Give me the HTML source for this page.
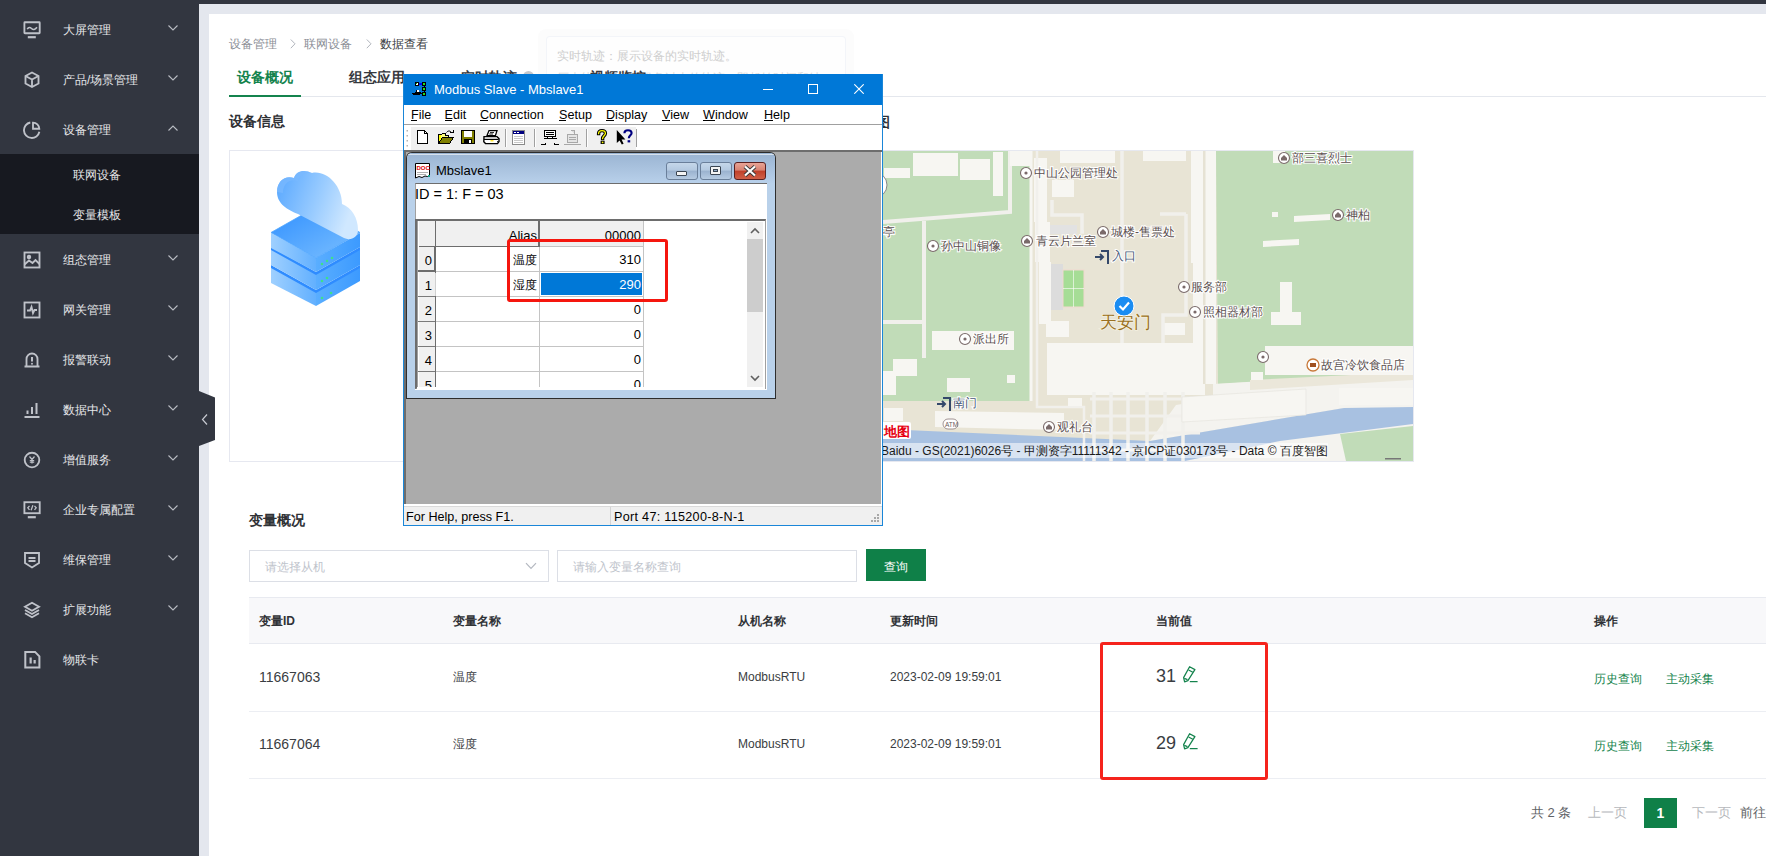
<!DOCTYPE html>
<html><head><meta charset="utf-8">
<style>
*{margin:0;padding:0;box-sizing:border-box}
html,body{width:1766px;height:856px;overflow:hidden;background:#e4e7ee;font-family:"Liberation Sans",sans-serif;position:relative}
.abs{position:absolute}
#side{position:absolute;left:0;top:0;width:199px;height:856px;background:#323640}
#topbar{position:absolute;left:0;top:0;width:1766px;height:4px;background:#323640}
.mi{position:absolute;left:0;width:199px;height:50px;color:#e6e7ea;font-size:12px;line-height:50px}
.mi .t{position:absolute;left:63px;top:1px}
.mi svg.ic{position:absolute;left:23px;top:17px;width:18px;height:18px}
.mi .chev{position:absolute;left:168px;top:21px;width:10px;height:6px}
#sub{position:absolute;left:0;top:154px;width:199px;height:80px;background:#171920}
.si{position:absolute;left:73px;margin-top:1px;color:#e6e6e8;font-size:12px;line-height:40px;height:40px}
#card{position:absolute;left:209px;top:14px;width:1557px;height:842px;background:#fff}
.tab{font-size:14px;line-height:18px;font-weight:bold;color:#36393e;white-space:nowrap}
.h2{font-size:14px;line-height:18px;font-weight:bold;color:#303236;white-space:nowrap}
.ph{font-size:12px;line-height:16px;color:#c0c4cc;white-space:nowrap}
.th{top:613px;font-size:12px;line-height:16px;font-weight:bold;color:#303236;white-space:nowrap}
.td14{font-size:14px;line-height:18px;color:#3a3d42;white-space:nowrap}
.td12{font-size:12px;line-height:18px;color:#3a3d42;white-space:nowrap}
.val{font-size:18px;line-height:24px;color:#3a3d42}
.lk{font-size:12px;line-height:18px;color:#14834d;white-space:nowrap;margin-top:2px}
.pg{font-size:13px;line-height:18px;white-space:nowrap;margin-top:1px}
.menu{top:107px;font-size:12.6px;line-height:16px;color:#000;white-space:nowrap}
.ul{top:120px;height:1px;background:#000}
.stat{top:509px;font-size:12.6px;line-height:16px;color:#000;white-space:nowrap}
.gt{font-size:13px;line-height:14px;color:#000;white-space:nowrap}
</style></head><body>
<div id="side">
<div class="mi" style="top:4px"><svg class="ic" viewBox="0 0 18 18" fill="none" stroke="#bfc2c9" stroke-width="1.85"><rect x="1.4" y="1.2" width="15.3" height="11" rx="0.5"/><path d="M4.2 8.2 C5.5 6,7 6,8.5 7.5 S12 9,14 6.2" stroke-width="1.5"/><path d="M4.8 16.2h8" stroke-width="2.2"/></svg><span class="t">大屏管理</span>
<svg class="chev" viewBox="0 0 10 6" fill="none" stroke="#b9bcc3" stroke-width="1.1"><path d="M0.5 0.5 L5 5 L9.5 0.5"/></svg>
</div>
<div class="mi" style="top:54px"><svg class="ic" viewBox="0 0 18 18" fill="none" stroke="#bfc2c9" stroke-width="1.85"><path d="M9 1.5 L15.5 5 V12.5 L9 16 L2.5 12.5 V5 Z"/><path d="M2.5 5 L9 8.5 L15.5 5 M9 8.5 V16"/></svg><span class="t">产品/场景管理</span>
<svg class="chev" viewBox="0 0 10 6" fill="none" stroke="#b9bcc3" stroke-width="1.1"><path d="M0.5 0.5 L5 5 L9.5 0.5"/></svg>
</div>
<div class="mi" style="top:104px"><svg class="ic" viewBox="0 0 18 18" fill="none" stroke="#bfc2c9" stroke-width="1.85"><path d="M7.3 1.5 A7.8 7.8 0 1 0 16.4 10.8"/><path d="M10 1.6 V7.7 H16.3 A6.3 6.3 0 0 0 10 1.6 Z"/></svg><span class="t">设备管理</span>
<svg class="chev" viewBox="0 0 10 6" fill="none" stroke="#b9bcc3" stroke-width="1.1"><path d="M0.5 5.5 L5 1 L9.5 5.5"/></svg>
</div>
<div id="sub"><div class="si" style="top:0">联网设备</div><div class="si" style="top:40px">变量模板</div></div>
<div class="mi" style="top:234px"><svg class="ic" viewBox="0 0 18 18" fill="none" stroke="#bfc2c9" stroke-width="1.85"><rect x="1.5" y="1.5" width="15" height="15"/><circle cx="6" cy="6" r="1.3" fill="#b9bcc3"/><path d="M1.5 13.5 L6 9.5 L9.5 12 L12.5 9 L16.5 13"/></svg><span class="t">组态管理</span>
<svg class="chev" viewBox="0 0 10 6" fill="none" stroke="#b9bcc3" stroke-width="1.1"><path d="M0.5 0.5 L5 5 L9.5 0.5"/></svg>
</div>
<div class="mi" style="top:284px"><svg class="ic" viewBox="0 0 18 18" fill="none" stroke="#bfc2c9" stroke-width="1.85"><rect x="1.5" y="1.5" width="15" height="15"/><path d="M4 9.5 H7 L8.5 6 L10 12 L11.5 9 H14"/></svg><span class="t">网关管理</span>
<svg class="chev" viewBox="0 0 10 6" fill="none" stroke="#b9bcc3" stroke-width="1.1"><path d="M0.5 0.5 L5 5 L9.5 0.5"/></svg>
</div>
<div class="mi" style="top:334px"><svg class="ic" viewBox="0 0 18 18" fill="none" stroke="#bfc2c9" stroke-width="1.85"><path d="M3.5 15 V8 A5.5 5.5 0 0 1 14.5 8 V15"/><path d="M1.5 15.5 H16.5" stroke-width="2"/><path d="M9 6 V10.5" stroke-width="2"/><circle cx="9" cy="12.8" r="1" fill="#b9bcc3" stroke="none"/></svg><span class="t">报警联动</span>
<svg class="chev" viewBox="0 0 10 6" fill="none" stroke="#b9bcc3" stroke-width="1.1"><path d="M0.5 0.5 L5 5 L9.5 0.5"/></svg>
</div>
<div class="mi" style="top:384px"><svg class="ic" viewBox="0 0 18 18" fill="none" stroke="#bfc2c9" stroke-width="1.85"><path d="M1.5 16 H16.5" stroke-width="2"/><path d="M4.5 13 V9.5 M9 13 V6 M13.5 13 V2" stroke-width="2"/></svg><span class="t">数据中心</span>
<svg class="chev" viewBox="0 0 10 6" fill="none" stroke="#b9bcc3" stroke-width="1.1"><path d="M0.5 0.5 L5 5 L9.5 0.5"/></svg>
</div>
<div class="mi" style="top:434px"><svg class="ic" viewBox="0 0 18 18" fill="none" stroke="#bfc2c9" stroke-width="1.85"><circle cx="9" cy="9" r="7.3"/><path d="M6.5 5.5 L9 8.5 L11.5 5.5 M9 8.5 V12.5 M6.8 9.5 H11.2 M6.8 11.2 H11.2" stroke-width="1.2"/></svg><span class="t">增值服务</span>
<svg class="chev" viewBox="0 0 10 6" fill="none" stroke="#b9bcc3" stroke-width="1.1"><path d="M0.5 0.5 L5 5 L9.5 0.5"/></svg>
</div>
<div class="mi" style="top:484px"><svg class="ic" viewBox="0 0 18 18" fill="none" stroke="#bfc2c9" stroke-width="1.85"><rect x="1.4" y="1.2" width="15.3" height="11"/><path d="M6.5 4.8 L4.8 6.8 L6.5 8.8 M11.5 4.8 L13.2 6.8 L11.5 8.8 M9.9 4.3 L8.1 9.3" stroke-width="1.3"/><path d="M4.8 16.2h8" stroke-width="2.2"/></svg><span class="t">企业专属配置</span>
<svg class="chev" viewBox="0 0 10 6" fill="none" stroke="#b9bcc3" stroke-width="1.1"><path d="M0.5 0.5 L5 5 L9.5 0.5"/></svg>
</div>
<div class="mi" style="top:534px"><svg class="ic" viewBox="0 0 18 18" fill="none" stroke="#bfc2c9" stroke-width="1.85"><path d="M2 2 H16 V12 L9 16.5 L2 12 Z"/><path d="M5.5 7 H12.5 M5.5 10 H12.5"/></svg><span class="t">维保管理</span>
<svg class="chev" viewBox="0 0 10 6" fill="none" stroke="#b9bcc3" stroke-width="1.1"><path d="M0.5 0.5 L5 5 L9.5 0.5"/></svg>
</div>
<div class="mi" style="top:584px"><svg class="ic" viewBox="0 0 18 18" fill="none" stroke="#bfc2c9" stroke-width="1.85"><path d="M9 1.8 L16 5.8 L9 9.8 L2 5.8 Z"/><path d="M2 9 L9 13 L16 9"/><path d="M2 12.2 L9 16.2 L16 12.2"/></svg><span class="t">扩展功能</span>
<svg class="chev" viewBox="0 0 10 6" fill="none" stroke="#b9bcc3" stroke-width="1.1"><path d="M0.5 0.5 L5 5 L9.5 0.5"/></svg>
</div>
<div class="mi" style="top:634px"><svg class="ic" viewBox="0 0 18 18" fill="none" stroke="#bfc2c9" stroke-width="1.85"><path d="M2.3 0.9 H12 L16.4 5.3 V16.4 H2.3 Z" stroke-width="2"/><path d="M7.65 12.6 V6.5 M11.65 12.6 V8.9" stroke-width="2.2"/></svg><span class="t">物联卡</span>
</div>

</div>
<div id="topbar"></div>
<div id="card"></div>
<!-- breadcrumb -->
<div class="abs" style="left:229px;top:36px;font-size:12px;line-height:16px;color:#8a8e96;white-space:nowrap">
<span class="abs" style="left:0">设备管理</span>
<svg class="abs" style="left:61px;top:3px" width="6" height="10" viewBox="0 0 6 10" fill="none" stroke="#b0b4bc" stroke-width="1"><path d="M0.8 0.5 L5 4.8 L0.8 9.2"/></svg>
<span class="abs" style="left:75px">联网设备</span>
<svg class="abs" style="left:137px;top:3px" width="6" height="10" viewBox="0 0 6 10" fill="none" stroke="#b0b4bc" stroke-width="1"><path d="M0.8 0.5 L5 4.8 L0.8 9.2"/></svg>
<span class="abs" style="left:151px;color:#3a3d42">数据查看</span>
</div>
<!-- tabs -->
<div class="abs" style="left:229px;top:96px;width:1537px;height:1px;background:#e4e7ed"></div>
<div class="abs" style="left:229px;top:95px;width:72px;height:2px;background:#14834d"></div>
<div class="abs tab" style="left:237px;top:68px;color:#14834d">设备概况</div>
<div class="abs tab" style="left:349px;top:68px">组态应用</div>
<div class="abs tab" style="left:461px;top:68px">实时轨迹</div>

<!-- section titles -->
<div class="abs h2" style="left:229px;top:112px">设备信息</div>
<div class="abs h2" style="left:834px;top:113px">位置地图</div>
<div class="abs" id="devbox" style="left:229px;top:150px;width:600px;height:312px;border:1px solid #e6e8f0"></div>
<!--CLOUD-->
<svg class="abs" style="left:260px;top:160px" width="110" height="155" viewBox="260 160 110 155">
<defs>
<linearGradient id="gl" x1="0" y1="0" x2="1" y2="0"><stop offset="0" stop-color="#9fd0ff"/><stop offset="1" stop-color="#62b0ff"/></linearGradient>
<linearGradient id="gr" x1="0" y1="0" x2="1" y2="0"><stop offset="0" stop-color="#5aaeff"/><stop offset="1" stop-color="#3c9aff"/></linearGradient>
<linearGradient id="gt" x1="0" y1="0" x2="1" y2="1"><stop offset="0" stop-color="#2f8fff"/><stop offset="1" stop-color="#7cc0ff"/></linearGradient>
<linearGradient id="gc" x1="0" y1="0" x2="1" y2="0.3"><stop offset="0" stop-color="#55a6ff"/><stop offset="0.6" stop-color="#9ccdff"/><stop offset="1" stop-color="#d0e8ff"/></linearGradient>
</defs>
<g>
<path d="M271 267 L316 292 L316 306 L271 283 Z" fill="url(#gl)"/>
<path d="M316 292 L360 267 L360 281 L316 306 Z" fill="url(#gr)"/>
<path d="M271 265 L316 290 L360 265 L360 268 L316 293 L271 268 Z" fill="#2f8cff"/>
<path d="M271 249 L316 274 L316 290 L271 265 Z" fill="url(#gl)"/>
<path d="M316 274 L360 249 L360 265 L316 290 Z" fill="url(#gr)"/>
<path d="M271 247 L316 272 L360 247 L360 250 L316 275 L271 250 Z" fill="#2f8cff"/>
<path d="M271 233 L316 258 L316 272 L271 248 Z" fill="url(#gl)"/>
<path d="M316 258 L360 233 L360 247 L316 272 Z" fill="url(#gr)"/>
<path d="M271 232.5 L316 207 L360 232.5 L316 258 Z" fill="url(#gt)" stroke="#4ea6ff" stroke-width="0.8"/>
<path d="M298 214 C288 210,277 204,277 192 C277 180,286 175,294 178 C296 171,304 169,312 173 C326 170,342 185,342 204 C352 208,358 218,358 230 C358 238,350 241,344 238 Z" fill="url(#gc)"/>
<path d="M277 192 C277 180,286 175,294 178 C296 171,304 169,312 173 C305 172,300 175,298 181 C290 178,283 183,283 193 Z" fill="#7ab9ff" opacity="0.7"/>
</g>
<g fill="#3ee08a">
<circle cx="322" cy="264" r="1.3"/><circle cx="327" cy="261" r="1.3"/><circle cx="332" cy="258" r="1.3"/>
<circle cx="322" cy="281" r="1.3"/><circle cx="327" cy="278" r="1.3"/>
<circle cx="322" cy="298" r="1.3"/><circle cx="331" cy="293" r="1.3"/>
</g>
</svg>

<!--/CLOUD-->
<!--MAP-->
<svg class="abs" style="left:883px;top:151px" width="530" height="310" viewBox="883 151 530 310" font-family="Liberation Sans, sans-serif">
<rect x="883" y="151" width="530" height="310" fill="#e8e4d5"/>
<rect x="883" y="151" width="148" height="250" fill="#c1dcb8"/>
<path d="M1216 151 H1413 V372 L1218 384 Z" fill="#c1dcb8"/>
<path d="M1213 384 L1413 372 V408 L1344 408 L1150 441 L1176 405 L1213 399 Z" fill="#f4f3ef"/>
<path d="M1150 441 L1344 408 L1413 408 V461 H1140 Z" fill="#f4f3ef"/>
<path d="M1340 434 L1413 426 V461 H1346 Z" fill="#c1dcb8"/>
<path d="M883 429 L1150 441 L1344 408 L1413 407 V424 L1280 441 L1185 461 H883 Z" fill="#a8c1e1"/>
<path d="M883 222 L1010 212 V151" fill="none" stroke="#f1f0ec" stroke-width="4"/>
<path d="M924 221 V358 M883 322 H924" fill="none" stroke="#f1f0ec" stroke-width="4"/>
<rect x="884" y="168" width="26" height="10" fill="#f7f6f2"/>
<rect x="913" y="153" width="45" height="23" fill="#f7f6f2"/>
<rect x="960" y="159" width="30" height="21" fill="#f7f6f2"/>
<rect x="993" y="152" width="10" height="44" fill="#f7f6f2"/>
<rect x="1010" y="151" width="21" height="15" fill="#f7f6f2"/>
<rect x="932" y="331" width="82" height="19" fill="#f7f6f2"/>
<rect x="893" y="359" width="24" height="17" fill="#f7f6f2"/>
<rect x="883" y="371" width="13" height="24" fill="#f7f6f2"/>
<rect x="947" y="378" width="23" height="14" fill="#f7f6f2"/>
<rect x="1007" y="375" width="8" height="8" fill="#f7f6f2"/>
<path d="M1250 380 L1413 372 V380 L1250 390 Z" fill="#ebe7da"/>
<path d="M1031 151 V401" stroke="#f7f6f2" stroke-width="3"/>
<rect x="1034" y="158" width="13" height="64" fill="#f7f6f2"/>
<rect x="1035" y="222" width="15" height="40" fill="#f7f6f2"/>
<rect x="1039" y="262" width="12" height="62" fill="#f7f6f2"/>
<rect x="1046" y="321" width="23" height="16" fill="#f7f6f2"/>
<rect x="1052" y="180" width="22" height="17" fill="#f7f6f2"/>
<rect x="1191" y="151" width="12" height="62" fill="#f7f6f2"/>
<rect x="1191" y="213" width="14" height="50" fill="#f7f6f2"/>
<rect x="1193" y="263" width="12" height="80" fill="#f7f6f2"/>
<rect x="1204" y="151" width="12" height="233" fill="#f7f6f2"/>
<rect x="1047" y="343" width="158" height="52" fill="#f7f6f2"/>
<rect x="1143" y="151" width="43" height="10" fill="#f7f6f2"/>
<rect x="1163" y="323" width="22" height="12" fill="#f7f6f2"/>
<rect x="1060" y="151" width="55" height="12" fill="#f7f6f2"/>
<rect x="1203" y="151" width="2.5" height="233" fill="#e6e2d4"/>
<rect x="1273" y="151" width="12" height="12" fill="#f7f6f2"/>
<path d="M1122 151 V343 M1186 214 V315 H1163 V343 M1052 200 V215 H1082 V232 L1084 232 M1186 214 H1160" fill="none" stroke="#f1f0ec" stroke-width="3.5"/>
<path d="M1037 151 V407 H1084 V461" fill="none" stroke="#f1f0ec" stroke-width="2.5"/>
<rect x="1050" y="225" width="27" height="9" fill="#e2e2e2"/>
<rect x="1051" y="264" width="12" height="46" fill="#dcdcdc"/>
<rect x="1063" y="270" width="21" height="37" fill="#a6dd96" stroke="#f0d8d0" stroke-width="1"/>
<path d="M1063 288.5 H1084 M1073.5 270 V307" stroke="#fff" stroke-width="0.6"/>
<path d="M1094 392 V461" stroke="#f1f0ec" stroke-width="3.5"/>
<path d="M1111 392 V461" stroke="#f1f0ec" stroke-width="3.5"/>
<path d="M1128 392 V461" stroke="#f1f0ec" stroke-width="3.5"/>
<path d="M1147 392 V461" stroke="#f1f0ec" stroke-width="3.5"/>
<path d="M1165 392 V461" stroke="#f1f0ec" stroke-width="3.5"/>
<path d="M1183 392 V461" stroke="#f1f0ec" stroke-width="3.5"/>
<path d="M1090 399 H1200" stroke="#f1f0ec" stroke-width="3"/>
<path d="M1090 416 H1200" stroke="#f1f0ec" stroke-width="3"/>
<path d="M1090 433 H1200" stroke="#f1f0ec" stroke-width="3"/>
<path d="M1090 450 H1200" stroke="#f1f0ec" stroke-width="3"/>
<rect x="1272" y="212" width="6" height="5" fill="#f7f6f2"/>
<rect x="1280" y="282" width="12" height="35" fill="#f7f6f2"/>
<rect x="1271" y="312" width="30" height="13" fill="#f7f6f2"/>
<rect x="1265" y="346" width="148" height="29" fill="#f7f6f2"/>
<rect x="1251" y="372" width="12" height="8" fill="#f7f6f2"/>
<rect x="1339" y="388" width="74" height="17" fill="#f7f6f2"/>
<path d="M1294 216 L1330 214 V220 L1294 222 Z M1263 241 L1299 239 V245 L1263 247 Z" fill="#f7f6f2"/>
<path d="M1182 397 L1306 389 V415 L1182 422 Z" fill="#f7f6f2" stroke="#e4e2dc" stroke-width="0.6"/>
<path d="M935 411 L1064 413 V430 L935 427 Z" fill="#f7f6f2"/>
<rect x="884" y="408" width="19" height="13" fill="#f7f6f2"/>
<rect x="1068" y="398" width="14" height="8" fill="#f7f6f2"/>
<circle cx="1026" cy="173" r="5.5" fill="#fff" stroke="#7a6a6a" stroke-width="1.1"/><circle cx="1026" cy="173" r="1.6" fill="#7a6a6a"/>
<text x="1034" y="177.3" font-size="12" fill="#5b5050" stroke="#fff" stroke-width="2" paint-order="stroke">中山公园管理处</text>
<circle cx="933" cy="246" r="5.5" fill="#fff" stroke="#7a6a6a" stroke-width="1.1"/><circle cx="933" cy="246" r="1.6" fill="#7a6a6a"/>
<text x="941" y="250.3" font-size="12" fill="#5b5050" stroke="#fff" stroke-width="2" paint-order="stroke">孙中山铜像</text>
<circle cx="1027" cy="241" r="5.5" fill="#fff" stroke="#7a6a6a" stroke-width="1.1"/><path d="M1024 243.5 H1030 V241 L1027 238 L1024 241 Z" fill="#7a6a6a"/>
<text x="1036" y="245.3" font-size="12" fill="#5b5050" stroke="#fff" stroke-width="2" paint-order="stroke">青云片兰室</text>
<circle cx="1103" cy="232" r="5.5" fill="#fff" stroke="#7a6a6a" stroke-width="1.1"/><path d="M1100 234.5 H1106 V232 L1103 229 L1100 232 Z" fill="#7a6a6a"/>
<text x="1111" y="236.3" font-size="12" fill="#5b5050" stroke="#fff" stroke-width="2" paint-order="stroke">城楼-售票处</text>
<circle cx="1184" cy="287" r="5.5" fill="#fff" stroke="#7a6a6a" stroke-width="1.1"/><circle cx="1184" cy="287" r="1.6" fill="#7a6a6a"/>
<text x="1191" y="291.3" font-size="12" fill="#5b5050" stroke="#fff" stroke-width="2" paint-order="stroke">服务部</text>
<circle cx="1195" cy="312" r="5.5" fill="#fff" stroke="#7a6a6a" stroke-width="1.1"/><circle cx="1195" cy="312" r="1.6" fill="#7a6a6a"/>
<text x="1203" y="316.3" font-size="12" fill="#5b5050" stroke="#fff" stroke-width="2" paint-order="stroke">照相器材部</text>
<circle cx="1284" cy="158" r="5.5" fill="#fff" stroke="#7a6a6a" stroke-width="1.1"/><path d="M1281 160.5 H1287 V158 L1284 155 L1281 158 Z" fill="#7a6a6a"/>
<text x="1292" y="162.3" font-size="12" fill="#5b5050" stroke="#fff" stroke-width="2" paint-order="stroke">部三喜烈士</text>
<circle cx="1338" cy="215" r="5.5" fill="#fff" stroke="#7a6a6a" stroke-width="1.1"/><path d="M1335 217.5 H1341 V215 L1338 212 L1335 215 Z" fill="#7a6a6a"/>
<text x="1346" y="219.3" font-size="12" fill="#5b5050" stroke="#fff" stroke-width="2" paint-order="stroke">神柏</text>
<circle cx="965" cy="339" r="5.5" fill="#fff" stroke="#7a6a6a" stroke-width="1.1"/><circle cx="965" cy="339" r="1.6" fill="#7a6a6a"/>
<text x="973" y="343.3" font-size="12" fill="#5b5050" stroke="#fff" stroke-width="2" paint-order="stroke">派出所</text>
<circle cx="1049" cy="427" r="5.5" fill="#fff" stroke="#7a6a6a" stroke-width="1.1"/><path d="M1046 429.5 H1052 V427 L1049 424 L1046 427 Z" fill="#7a6a6a"/>
<text x="1057" y="431.3" font-size="12" fill="#5b5050" stroke="#fff" stroke-width="2" paint-order="stroke">观礼台</text>
<circle cx="1263" cy="357" r="5.5" fill="#fff" stroke="#7a6a6a" stroke-width="1.1"/><circle cx="1263" cy="357" r="1.6" fill="#7a6a6a"/>
<circle cx="1313" cy="365" r="6" fill="#fff" stroke="#c87838" stroke-width="1.3"/><rect x="1310" y="363" width="6" height="4" fill="#a05020"/>
<text x="1321" y="369.3" font-size="12" fill="#5b5050" stroke="#fff" stroke-width="2" paint-order="stroke">故宫冷饮食品店</text>
<text x="883" y="236.3" font-size="12" fill="#5b5050" stroke="#fff" stroke-width="2" paint-order="stroke">亭</text>
<path d="M1101 251 H1108 V264" fill="none" stroke="#34486a" stroke-width="2"/><path d="M1095 257 H1103 M1100 254 L1103 257 L1100 260" fill="none" stroke="#34486a" stroke-width="2"/>
<path d="M943 398 H950 V411" fill="none" stroke="#34486a" stroke-width="2"/><path d="M937 404 H945 M942 401 L945 404 L942 407" fill="none" stroke="#34486a" stroke-width="2"/>
<text x="1112" y="260.3" font-size="12" fill="#4a5a78" stroke="#fff" stroke-width="2" paint-order="stroke">入口</text>
<text x="953" y="407.3" font-size="12" fill="#4a5a78" stroke="#fff" stroke-width="2" paint-order="stroke">南门</text>
<rect x="943" y="419" width="15" height="10" rx="5" fill="#fff" stroke="#8a7a7a" stroke-width="0.8"/><text x="945" y="427" font-size="6.5" fill="#6a5a5a">ATM</text>
<text x="1100" y="328" font-size="16.5" fill="#9a7022" stroke="#f4f0e0" stroke-width="1.5" paint-order="stroke">天安门</text>
<circle cx="1124" cy="306" r="10" fill="#1a8cf2" stroke="#fff" stroke-width="1"/><path d="M1119.5 306 L1123 309.5 L1129 302.5" fill="none" stroke="#fff" stroke-width="2.2"/>
<rect x="880" y="422" width="31" height="17" rx="2" fill="#fff"/><text x="884" y="436" font-size="13" font-weight="bold" fill="#e60012">地图</text>
<rect x="883" y="443" width="445" height="15" fill="rgba(255,255,255,0.55)"/>
<text x="881" y="455" font-size="12" fill="#1a1a1a">Baidu - GS(2021)6026号 - 甲测资字11111342 - 京ICP证030173号 - Data © 百度智图</text>
<rect x="1385" y="458" width="16" height="1.5" fill="#777"/>
</svg>
<div class="abs" style="left:883px;top:150px;width:531px;height:1px;background:#e6e8f0"></div>
<div class="abs" style="left:883px;top:461px;width:531px;height:1px;background:#e6e8f0"></div>
<div class="abs" style="left:1413px;top:150px;width:1px;height:312px;background:#e6e8f0"></div>
<svg class="abs" style="left:860px;top:170px" width="30" height="30"><circle cx="14" cy="15" r="13" fill="#fff" stroke="#888" stroke-width="1"/></svg>
<!--/MAP-->
<div class="abs h2" style="left:249px;top:511px">变量概况</div>
<!-- filters -->
<div class="abs" style="left:249px;top:550px;width:300px;height:32px;border:1px solid #dcdfe6"></div>
<div class="abs ph" style="left:265px;top:559px">请选择从机</div>
<svg class="abs" style="left:525px;top:562px" width="12" height="8" viewBox="0 0 12 8" fill="none" stroke="#b4b8c0" stroke-width="1.2"><path d="M1 1.2 L6 6.5 L11 1.2"/></svg>
<div class="abs" style="left:557px;top:550px;width:300px;height:32px;border:1px solid #dcdfe6"></div>
<div class="abs ph" style="left:573px;top:559px">请输入变量名称查询</div>
<div class="abs" style="left:866px;top:549px;width:60px;height:32px;background:#0f8048;color:#fff;font-size:12px;line-height:32px;text-align:center;padding-top:2px">查询</div>
<!-- table -->
<div class="abs" style="left:249px;top:597px;width:1517px;height:47px;background:#f8f8fa;border-top:1px solid #e8eaf0;border-bottom:1px solid #e8eaf0"></div>
<div class="abs" style="left:249px;top:711px;width:1517px;height:1px;background:#eceef3"></div>
<div class="abs" style="left:249px;top:778px;width:1517px;height:1px;background:#eceef3"></div>
<div class="abs th" style="left:259px">变量ID</div>
<div class="abs th" style="left:453px">变量名称</div>
<div class="abs th" style="left:738px">从机名称</div>
<div class="abs th" style="left:890px">更新时间</div>
<div class="abs th" style="left:1156px">当前值</div>
<div class="abs th" style="left:1594px">操作</div>
<div class="abs td14" style="left:259px;top:668px">11667063</div>
<div class="abs td12" style="left:453px;top:668px">温度</div>
<div class="abs td12" style="left:738px;top:668px">ModbusRTU</div>
<div class="abs td12" style="left:890px;top:668px">2023-02-09 19:59:01</div>
<div class="abs val" style="left:1156px;top:664px">31</div>
<svg class="abs" style="left:1183px;top:666px" width="16" height="17" viewBox="0 0 16 17" fill="none" stroke="#14834d" stroke-width="1.25" stroke-linejoin="round"><path d="M6.6 0.7 L11.9 3.6 L4.9 14.6 L1.6 15.8 L0.6 11.6 Z"/><path d="M5.6 4 L9.8 6.2 M1.3 12.3 L4.5 13.6"/><path d="M6.8 15.6 H14.6"/></svg>
<div class="abs lk" style="left:1594px;top:668px">历史查询</div>
<div class="abs lk" style="left:1666px;top:668px">主动采集</div>
<div class="abs td14" style="left:259px;top:735px">11667064</div>
<div class="abs td12" style="left:453px;top:735px">湿度</div>
<div class="abs td12" style="left:738px;top:735px">ModbusRTU</div>
<div class="abs td12" style="left:890px;top:735px">2023-02-09 19:59:01</div>
<div class="abs val" style="left:1156px;top:731px">29</div>
<svg class="abs" style="left:1183px;top:733px" width="16" height="17" viewBox="0 0 16 17" fill="none" stroke="#14834d" stroke-width="1.25" stroke-linejoin="round"><path d="M6.6 0.7 L11.9 3.6 L4.9 14.6 L1.6 15.8 L0.6 11.6 Z"/><path d="M5.6 4 L9.8 6.2 M1.3 12.3 L4.5 13.6"/><path d="M6.8 15.6 H14.6"/></svg>
<div class="abs lk" style="left:1594px;top:735px">历史查询</div>
<div class="abs lk" style="left:1666px;top:735px">主动采集</div>

<div class="abs" style="left:1100px;top:642px;width:168px;height:138px;border:3px solid #f5231c;border-radius:3px"></div>
<!-- pagination -->
<div class="abs pg" style="left:1531px;top:803px;color:#606266">共 2 条</div>
<div class="abs pg" style="left:1588px;top:803px;color:#b6b8bc">上一页</div>
<div class="abs" style="left:1644px;top:798px;width:33px;height:30px;background:#0f8048;color:#fff;font-size:14px;font-weight:bold;line-height:30px;text-align:center">1</div>
<div class="abs pg" style="left:1692px;top:803px;color:#b6b8bc">下一页</div>
<div class="abs pg" style="left:1740px;top:803px;color:#606266">前往</div>
<!-- collapse tab -->
<svg class="abs" style="left:199px;top:391px" width="16" height="56" viewBox="0 0 16 56"><path d="M0 0 L16 6.5 V49 L0 55 Z" fill="#323640"/><path d="M8 23.5 L3.5 28.5 L8 33.5" fill="none" stroke="#c8cbd2" stroke-width="1.2"/></svg>

<svg class="abs" style="left:523px;top:71px" width="11" height="11" viewBox="0 0 11 11"><circle cx="5.5" cy="5.5" r="5.5" fill="#c4c7cc"/><text x="3" y="9" font-size="8" font-weight="bold" fill="#fff" font-family="Liberation Sans">?</text></svg>
<div class="abs" style="left:538px;top:29px;width:316px;height:60px;border-radius:8px;background:rgba(245,245,245,0.35)"></div>
<div class="abs" style="left:546px;top:36px;width:300px;height:60px;border-radius:4px;background:rgba(255,255,255,0.6);border:1px solid rgba(235,238,245,0.6)"></div>
<div class="abs" style="left:557px;top:48px;font-size:12px;line-height:16px;color:#cfcfcf;white-space:nowrap">实时轨迹：展示设备的实时轨迹。</div>
<div class="abs" style="left:557px;top:70px;font-size:12px;line-height:16px;color:#d8d8d8;white-space:nowrap">历史轨迹：展示设备过去的轨迹，即起始时间和结</div>
<div class="abs tab" style="left:590px;top:68px">视频监控</div>
<!--WIN-->
<div class="abs" style="left:403px;top:74px;width:480px;height:452px;background:#1a86d8"></div>
<div class="abs" style="left:404px;top:74px;width:478px;height:31px;background:#0078d7"></div>
<svg class="abs" style="left:411px;top:81px" width="16" height="15" viewBox="0 0 16 15" shape-rendering="crispEdges">
  <rect x="7" y="1.5" width="4.5" height="2" fill="#0000ff"/>
  <rect x="12.5" y="3" width="1.5" height="9" fill="#000"/>
  <rect x="3.5" y="0.5" width="4" height="4" fill="#000"/><rect x="4.5" y="1.5" width="2" height="2" fill="#fff"/><rect x="5" y="1.5" width="1" height="1" fill="#00c000"/>
  <rect x="11" y="0.5" width="4" height="4" fill="#000"/><rect x="12" y="1.5" width="2" height="2" fill="#22dd22"/>
  <rect x="11" y="5.5" width="4" height="4" fill="#000"/><rect x="12" y="6.5" width="2" height="2" fill="#22dd22"/>
  <rect x="11" y="10.5" width="4" height="4" fill="#000"/><rect x="12" y="11.5" width="2" height="2" fill="#22dd22"/>
  <path d="M1 12 H3 L4 11 H5 V9 H8 V11 H9 L10 12 H11 V13 H9 V14 H2 Z" fill="#000"/>
  <rect x="6" y="9" width="1.5" height="1.5" fill="#fff"/>
 </svg>
<div class="abs" style="left:434px;top:82px;color:#fff;font-size:13px;line-height:16px;white-space:nowrap">Modbus Slave - Mbslave1</div>
<div class="abs" style="left:763px;top:89px;width:10px;height:1px;background:#fff"></div>
<div class="abs" style="left:808px;top:84px;width:10px;height:10px;border:1px solid #fff"></div>
<svg class="abs" style="left:854px;top:84px" width="10" height="10" viewBox="0 0 10 10" stroke="#fff" stroke-width="1.1"><path d="M0.3 0.3 L9.7 9.7 M9.7 0.3 L0.3 9.7"/></svg>
<div class="abs" style="left:404px;top:105px;width:478px;height:420px;background:#fff"></div>
<div class="abs menu" style="left:411px">File</div><div class="abs ul" style="left:411px;width:6px"></div>
<div class="abs menu" style="left:444.5px">Edit</div><div class="abs ul" style="left:444.5px;width:7px"></div>
<div class="abs menu" style="left:480px">Connection</div><div class="abs ul" style="left:480px;width:8px"></div>
<div class="abs menu" style="left:559px">Setup</div><div class="abs ul" style="left:559px;width:7px"></div>
<div class="abs menu" style="left:606px">Display</div><div class="abs ul" style="left:606px;width:8px"></div>
<div class="abs menu" style="left:662px">View</div><div class="abs ul" style="left:662px;width:8px"></div>
<div class="abs menu" style="left:703px">Window</div><div class="abs ul" style="left:703px;width:12px"></div>
<div class="abs menu" style="left:764px">Help</div><div class="abs ul" style="left:764px;width:9px"></div>
<div class="abs" style="left:404px;top:124px;width:478px;height:1px;background:#a0a0a0"></div>
<div class="abs" style="left:411px;top:127px;width:225px;height:23px;background:#f0f0f0"></div>
<svg class="abs" style="left:405px;top:129px" width="4" height="20" viewBox="0 0 4 20" fill="#b4b4b4"><rect x="1.5" y="1" width="1.5" height="1.5"/><rect x="1.5" y="6" width="1.5" height="1.5"/><rect x="1.5" y="11" width="1.5" height="1.5"/><rect x="1.5" y="16" width="1.5" height="1.5"/></svg>
<svg class="abs" style="left:403px;top:125px" width="240" height="25" viewBox="0 0 240 25" shape-rendering="crispEdges">
 <!-- new -->
 <path d="M14.5 5.5 H21.5 L24.5 8.5 V18.5 H14.5 Z" fill="#fff" stroke="#000"/>
 <path d="M21.5 5.5 V8.5 H24.5" fill="none" stroke="#000"/>
 <!-- open -->
 <path d="M35.5 18.5 V9.5 H38.5 L39.5 8.5 H42.5 V10.5 H45.5 V12.5" fill="#ffff80" stroke="#000"/>
 <path d="M36 10 H38 V18 H36Z" fill="#ffff00"/>
 <path d="M35.5 18.5 L39.5 12.5 H50.5 L46.5 18.5 Z" fill="#808000" stroke="#000"/>
 <path d="M43.5 7.5 C45 5.5,47 5.5,48.5 7.5" fill="none" stroke="#000" shape-rendering="auto"/>
 <path d="M47 7.5 H50 V5" fill="none" stroke="#000"/>
 <!-- save -->
 <rect x="58.5" y="5.5" width="13" height="13" fill="#808000" stroke="#000"/>
 <rect x="61" y="6" width="8" height="6" fill="#fff"/>
 <rect x="61" y="14" width="8" height="4" fill="#000"/>
 <rect x="66" y="15" width="2" height="3" fill="#fff"/>
 <!-- print -->
 <g shape-rendering="auto">
 <path d="M86 5.6 H94 L92.4 10.6 H84 Z" fill="#fff" stroke="#000" stroke-width="1.3"/>
 <path d="M87 7.6 H91 M86.3 9 H90" stroke="#000" stroke-width="0.9"/>
 <path d="M81 11.6 H94 L96 13.5 V16.5 L94.5 18.6 H82.5 L80.8 16.8 Z" fill="#fff" stroke="#000" stroke-width="1.4"/>
 <path d="M81 14.4 H95.5" stroke="#000" stroke-width="1.2"/>
 <rect x="87.5" y="15.2" width="3" height="1.2" fill="#ffe000"/>
 <path d="M94 12 L96 14 M94 16 L95.5 17.5" stroke="#000" stroke-width="0.8"/>
 </g>
 <!-- sep -->
 <path d="M102.5 4 V22" stroke="#a0a0a0"/><path d="M103.5 4 V22" stroke="#fff"/>
 <!-- window -->
 <rect x="109.5" y="5.5" width="12" height="14" fill="#fff" stroke="#8a8a8a"/>
 <rect x="110" y="6" width="11" height="3" fill="#000080"/>
 <rect x="111" y="7" width="2" height="1" fill="#fff"/><rect x="114" y="7" width="2" height="1" fill="#fff"/>
 <path d="M111 11.5 H120 M111 13.5 H120 M111 15.5 H120 M111 17.5 H120" stroke="#c8c8c8"/>
 <path d="M131.5 4 V22" stroke="#a0a0a0"/><path d="M132.5 4 V22" stroke="#fff"/>
 <!-- connect -->
 <rect x="141.5" y="5.5" width="11" height="6" fill="#fff" stroke="#000"/>
 <path d="M143 7.5 H151 M143 9.5 H151" stroke="#000"/>
 <path d="M144.5 11.5 V13.5 H149.5 V11.5" fill="#fff" stroke="#000"/>
 <path d="M140.5 13.5 H153.5" stroke="#000"/>
 <path d="M138 19.5 H142 M152 19.5 H156 M142.5 18 V20 M151.5 18 V20" stroke="#000"/>
 <!-- disconnect -->
 <path d="M167.5 5.5 H171.5 V8.5" fill="#dcdcdc" stroke="#a8a8a8"/>
 <path d="M164.5 9.5 H174.5 V17.5 H164.5 Z" fill="#e4e4e4" stroke="#a8a8a8"/>
 <path d="M166 12.5 H173 M166 14.5 H173" stroke="#a8a8a8"/>
 <path d="M161 19.5 H178" stroke="#a8a8a8"/>
 <path d="M183.5 4 V22" stroke="#a0a0a0"/><path d="M184.5 4 V22" stroke="#fff"/>
 <!-- help -->
 <g shape-rendering="auto" fill="none" stroke-linecap="square">
 <path d="M195.6 8.6 C195.6 6.4,197.3 5.6,199 5.6 C201 5.6,202.4 6.8,202.4 8.4 C202.4 10.6,199.6 11,199.6 13.6" stroke="#000" stroke-width="3.4"/>
 <rect x="197.6" y="15.8" width="4" height="3.2" fill="#000"/>
 <path d="M195.6 8.6 C195.6 6.4,197.3 5.6,199 5.6 C201 5.6,202.4 6.8,202.4 8.4 C202.4 10.6,199.6 11,199.6 13.6" stroke="#ffff00" stroke-width="1.3"/>
 <rect x="198.8" y="16.6" width="1.6" height="1.6" fill="#ffff00"/>
 </g>
 <!-- context help -->
 <g shape-rendering="auto">
 <path d="M213.8 5 V18 L216.6 15.4 L218.8 19.6 L220.6 18.8 L218.6 14.6 H222.4 Z" fill="#000"/>
 <path d="M221.4 8.2 C221.4 6,223 5.2,225 5.2 C227.2 5.2,228.6 6.3,228.6 8 C228.6 10,225.8 10.6,225.8 13.2" fill="none" stroke="#000080" stroke-width="2.1"/>
 <rect x="224.6" y="15.2" width="2.6" height="2.2" fill="#000080"/>
 </g>
 <path d="M233.5 4 V22" stroke="#a0a0a0"/>
</svg>

<div class="abs" style="left:404px;top:150px;width:478px;height:2px;background:#6d6d6d"></div>
<div class="abs" style="left:404px;top:152px;width:477px;height:352px;background:#ababab"></div>
<div class="abs" style="left:404px;top:152px;width:2px;height:352px;background:#6d6d6d"></div>
<div class="abs" style="left:406px;top:152px;width:370px;height:247px;background:#2d2d2d;border-radius:6px 6px 0 0"></div>
<div class="abs" style="left:407px;top:153px;width:368px;height:245px;background:#b9d1ea;border-radius:5px 5px 0 0"></div>
<div class="abs" style="left:407px;top:153px;width:368px;height:30px;background:linear-gradient(#9ab4d2,#b8d0ea);border-radius:5px 5px 0 0"></div>
<div class="abs" style="left:408px;top:154px;width:366px;height:1px;background:rgba(255,255,255,.6);border-radius:5px 5px 0 0"></div>
<svg class="abs" style="left:415px;top:163px" width="16" height="16" viewBox="0 0 16 16">
 <path d="M0.5 0.5 H14.5 V12 L12.5 13.5 L10 13 L7 14.5 L4 13.5 L0.5 15 Z" fill="#fff" stroke="#000"/>
 <text x="1.5" y="6.5" font-family="Liberation Sans" font-weight="bold" font-size="6" fill="#e00000">DOC</text>
 <path d="M2 9.5 H13 M2 11.5 H11" stroke="#b0b0b0"/>
 <rect x="13" y="12" width="2" height="2" fill="#1aa58a"/>
</svg>
<div class="abs" style="left:436px;top:163px;font-size:13px;line-height:16px;color:#000;white-space:nowrap">Mbslave1</div>
<div class="abs" style="left:666px;top:162px;width:32px;height:18px;border:1px solid #6a7f9a;border-radius:3px;background:linear-gradient(#c5d7ea 0%,#b4c9e0 45%,#9ab2cf 50%,#b6cbe2 100%)"></div>
<div class="abs" style="left:676px;top:171px;width:11px;height:5px;background:#f4f4f4;border:1px solid #3a4552;border-radius:1px"></div>
<div class="abs" style="left:700px;top:162px;width:32px;height:18px;border:1px solid #6a7f9a;border-radius:3px;background:linear-gradient(#c5d7ea 0%,#b4c9e0 45%,#9ab2cf 50%,#b6cbe2 100%)"></div>
<div class="abs" style="left:710px;top:166px;width:11px;height:9px;background:#f4f4f4;border:1px solid #3a4552;border-radius:1px"></div>
<div class="abs" style="left:713px;top:169px;width:5px;height:3px;background:#8fa8c4;border:1px solid #3a4552"></div>
<div class="abs" style="left:734px;top:162px;width:32px;height:18px;border:1px solid #5a2020;border-radius:3px;background:linear-gradient(#e8a496 0%,#d88272 45%,#c0402a 50%,#d06048 100%)"></div>
<svg class="abs" style="left:743px;top:165px" width="14" height="12" viewBox="0 0 14 12"><path d="M2 1.5 L12 10.5 M12 1.5 L2 10.5" stroke="#3a3a3a" stroke-width="4"/><path d="M2 1.5 L12 10.5 M12 1.5 L2 10.5" stroke="#fff" stroke-width="2.2"/></svg>
<div class="abs" style="left:415px;top:183px;width:352px;height:37px;background:#fff;border-top:1px solid #6d6d6d;border-left:1px solid #a0a0a0"></div>
<div class="abs" style="left:415px;top:186px;font-size:14.5px;line-height:16px;color:#000;white-space:nowrap">ID = 1: F = 03</div>
<div class="abs" style="left:415px;top:219px;width:351px;height:170px;background:#fff;border-top:2px solid #6d6d6d;border-left:2px solid #6d6d6d;border-right:1px solid #a0a0a0;border-bottom:1px solid #a0a0a0"></div>
<div class="abs" style="left:766px;top:219px;width:1px;height:171px;background:#fff"></div>
<div class="abs" style="left:415px;top:389px;width:352px;height:1px;background:#fff"></div>
<div class="abs" style="left:418px;top:221px;width:225px;height:25px;background:#f0f0f0"></div>
<div class="abs" style="left:418px;top:221px;width:17px;height:166px;background:#f0f0f0"></div>
<div class="abs" style="left:417px;top:221px;width:1px;height:166px;background:#a0a0a0"></div>
<div class="abs" style="left:418px;top:221px;width:1px;height:166px;background:#fff"></div>
<div class="abs" style="left:436px;top:271px;width:207px;height:1px;background:#c4c4c4"></div>
<div class="abs" style="left:418px;top:271px;width:17px;height:1px;background:#7a7a7a"></div>
<div class="abs" style="left:436px;top:296px;width:207px;height:1px;background:#c4c4c4"></div>
<div class="abs" style="left:418px;top:296px;width:17px;height:1px;background:#7a7a7a"></div>
<div class="abs" style="left:436px;top:321px;width:207px;height:1px;background:#c4c4c4"></div>
<div class="abs" style="left:418px;top:321px;width:17px;height:1px;background:#7a7a7a"></div>
<div class="abs" style="left:436px;top:346px;width:207px;height:1px;background:#c4c4c4"></div>
<div class="abs" style="left:418px;top:346px;width:17px;height:1px;background:#7a7a7a"></div>
<div class="abs" style="left:436px;top:371px;width:207px;height:1px;background:#c4c4c4"></div>
<div class="abs" style="left:418px;top:371px;width:17px;height:1px;background:#7a7a7a"></div>
<div class="abs" style="left:539px;top:247px;width:1px;height:140px;background:#c4c4c4"></div>
<div class="abs" style="left:643px;top:221px;width:1px;height:166px;background:#c4c4c4"></div>
<div class="abs" style="left:436px;top:246px;width:207px;height:1px;background:#c4c4c4"></div>
<div class="abs" style="left:435px;top:221px;width:1px;height:166px;background:#6d6d6d"></div>
<div class="abs" style="left:435px;top:273px;width:1px;height:23px;background:#d0d0d0"></div>
<div class="abs" style="left:419px;top:246px;width:17px;height:1px;background:#6d6d6d"></div>
<div class="abs" style="left:436px;top:246px;width:103px;height:1px;background:#6d6d6d"></div>
<div class="abs" style="left:538px;top:221px;width:2px;height:26px;background:#6d6d6d"></div>
<div class="abs" style="left:418px;top:270px;width:18px;height:2px;background:#6d6d6d"></div>
<div class="abs" style="left:434px;top:247px;width:2px;height:25px;background:#6d6d6d"></div>
<div class="abs gt" style="left:436px;top:228.5px;width:101px;text-align:right">Alias</div>
<div class="abs gt" style="left:540px;top:228.5px;width:101px;text-align:right">00000</div>
<div class="abs gt" style="left:418px;top:254px;width:14px;text-align:right">0</div>
<div class="abs gt" style="left:436px;top:253px;width:101px;text-align:right;font-size:12px">温度</div>
<div class="abs gt" style="left:540px;top:253px;width:101px;text-align:right">310</div>
<div class="abs gt" style="left:418px;top:279px;width:14px;text-align:right">1</div>
<div class="abs gt" style="left:436px;top:278px;width:101px;text-align:right;font-size:12px">湿度</div>
<div class="abs" style="left:541px;top:273px;width:101px;height:22px;background:#0078d7"></div>
<div class="abs gt" style="left:540px;top:278px;width:101px;text-align:right;color:#fff">290</div>
<div class="abs gt" style="left:418px;top:304px;width:14px;text-align:right">2</div>
<div class="abs gt" style="left:540px;top:303px;width:101px;text-align:right">0</div>
<div class="abs gt" style="left:418px;top:329px;width:14px;text-align:right">3</div>
<div class="abs gt" style="left:540px;top:328px;width:101px;text-align:right">0</div>
<div class="abs gt" style="left:418px;top:354px;width:14px;text-align:right">4</div>
<div class="abs gt" style="left:540px;top:353px;width:101px;text-align:right">0</div>
<div class="abs gt" style="left:418px;top:379px;width:14px;text-align:right">5</div>
<div class="abs gt" style="left:540px;top:378px;width:101px;text-align:right">0</div>
<div class="abs" style="left:417px;top:387px;width:348px;height:3px;background:#fff"></div>
<div class="abs" style="left:407px;top:390px;width:368px;height:8px;background:#b9d1ea"></div>
<div class="abs" style="left:406px;top:398px;width:370px;height:1px;background:#2d2d2d"></div>
<div class="abs" style="left:747px;top:222px;width:16px;height:165px;background:#f0f0f0"></div>
<div class="abs" style="left:747px;top:239px;width:16px;height:73px;background:#cdcdcd"></div>
<svg class="abs" style="left:750px;top:227px" width="10" height="7" viewBox="0 0 10 7" fill="none" stroke="#606060" stroke-width="1.6"><path d="M1 6 L5 2 L9 6"/></svg>
<svg class="abs" style="left:750px;top:375px" width="10" height="7" viewBox="0 0 10 7" fill="none" stroke="#606060" stroke-width="1.6"><path d="M1 1 L5 5 L9 1"/></svg>
<div class="abs" style="left:507px;top:239px;width:161px;height:63px;border:3px solid #f5160e;border-radius:3px"></div>
<div class="abs" style="left:404px;top:504px;width:478px;height:2px;background:#fff"></div>
<div class="abs" style="left:404px;top:506px;width:478px;height:19px;background:#f0f0f0;border-top:1px solid #dadada"></div>
<div class="abs stat" style="left:406px">For Help, press F1.</div>
<div class="abs" style="left:610px;top:507px;width:1px;height:18px;background:#d4d4d4"></div>
<div class="abs stat" style="left:614px;letter-spacing:0.3px">Port 47: 115200-8-N-1</div>
<svg class="abs" style="left:871px;top:514px" width="9" height="9" viewBox="0 0 9 9" fill="#a8a8a8"><rect x="6" y="0" width="2" height="2"/><rect x="3" y="3" width="2" height="2"/><rect x="6" y="3" width="2" height="2"/><rect x="0" y="6" width="2" height="2"/><rect x="3" y="6" width="2" height="2"/><rect x="6" y="6" width="2" height="2"/></svg>
<!--/WIN-->
</body></html>
